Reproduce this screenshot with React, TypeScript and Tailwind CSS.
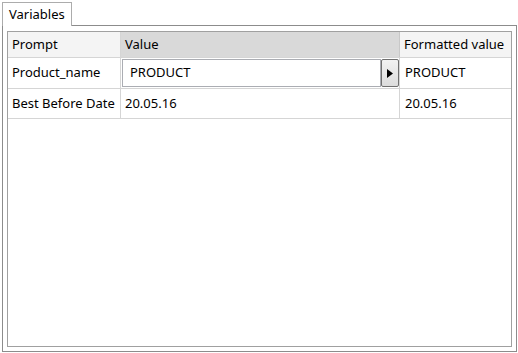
export default function App() {
  const font = { fontFamily: '"Segoe UI", "Noto Sans", "Open Sans", sans-serif' };
  return (
    <div className="h-[353px] w-[518px] bg-white text-[13px] text-black" style={font}>
      <div className="flex h-[25px] items-end pl-[2px]">
        <div className="relative top-[1px] flex h-[24px] items-center border border-b-0 border-[#acacac] bg-white px-[6px]">
          Variables
        </div>
      </div>
      <div className="ml-[2px] flex h-[327px] w-[515px] flex-col border border-[#8c8c8c] bg-white px-[4px] pt-[5px] pb-[4px]">
        <div className="flex flex-1 flex-col border border-[#a0a0a0]">
          <div className="grid h-[26px] grid-cols-[113px_279px_1fr] border-b border-[#d5d5d5]">
            <div className="flex items-center border-r border-[#d5d5d5] bg-[#f4f4f4] pl-[4px]">Prompt</div>
            <div className="flex items-center border-r border-[#c8c8c8] bg-[#d9d9d9] pl-[4px]">Value</div>
            <div className="flex items-center bg-[#f4f4f4] pl-[4px]">Formatted value</div>
          </div>
          <div className="grid h-[31px] grid-cols-[113px_279px_1fr] border-b border-[#d5d5d5]">
            <div className="flex items-center border-r border-[#d5d5d5] pl-[4px]">Product_name</div>
            <div className="flex border-r border-[#d5d5d5] py-[1px] pl-[1px]">
              <div className="flex flex-1 items-center border border-[#abadb3] pl-[7px]">PRODUCT</div>
              <button className="flex w-[18px] items-center justify-center rounded-[2px] border border-[#707070] bg-gradient-to-b from-[#f2f2f2] to-[#dcdcdc]">
                <svg width="6" height="9" viewBox="0 0 6 9">
                  <path d="M0 0 L6 4.5 L0 9 Z" fill="#000" />
                </svg>
              </button>
            </div>
            <div className="flex items-center pl-[5px]">PRODUCT</div>
          </div>
          <div className="grid h-[30px] grid-cols-[113px_279px_1fr] border-b border-[#d5d5d5]">
            <div className="flex items-center border-r border-[#d5d5d5] pl-[4px]">Best Before Date</div>
            <div className="flex items-center border-r border-[#d5d5d5] pl-[4px]">20.05.16</div>
            <div className="flex items-center pl-[5px]">20.05.16</div>
          </div>
        </div>
      </div>
    </div>
  );
}
